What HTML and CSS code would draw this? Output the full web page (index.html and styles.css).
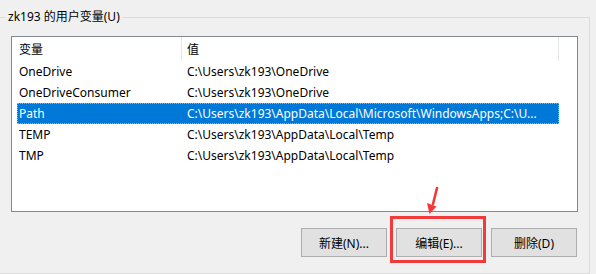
FILE: index.html
```html
<!DOCTYPE html>
<html lang="zh-CN">
<head>
    <meta charset="UTF-8">
    <meta name="viewport" content="width=device-width, initial-scale=1.0">
    <title>环境变量</title>
    <link rel="stylesheet" href="styles.css">
</head>
<body>
    <fieldset class="group">
        <legend class="group-title">zk193 的用户变量(U)</legend>

        <div class="list-view">
            <div class="list-header">
                <div class="col-head col-name">变量</div>
                <div class="col-head col-value">值</div>
                <div class="col-rest"></div>
            </div>
            <div class="list-row">
                <span class="cell">OneDrive</span>
                <span class="cell">C:\Users\zk193\OneDrive</span>
            </div>
            <div class="list-row">
                <span class="cell">OneDriveConsumer</span>
                <span class="cell">C:\Users\zk193\OneDrive</span>
            </div>
            <div class="list-row selected">
                <span class="cell">Path</span>
                <span class="cell">C:\Users\zk193\AppData\Local\Microsoft\WindowsApps;C:\U...</span>
            </div>
            <div class="list-row">
                <span class="cell">TEMP</span>
                <span class="cell">C:\Users\zk193\AppData\Local\Temp</span>
            </div>
            <div class="list-row">
                <span class="cell">TMP</span>
                <span class="cell">C:\Users\zk193\AppData\Local\Temp</span>
            </div>
        </div>

        <div class="button-row">
            <button class="button">新建(N)...</button>
            <div class="highlight">
                <button class="button">编辑(E)...</button>
                <!-- red annotation arrow -->
                <svg class="arrow" width="30" height="34" viewBox="0 0 30 34">
                    <path d="M21 4 L17 20" stroke="#f23a3a" stroke-width="2.6" stroke-linecap="round" fill="none"/>
                    <path d="M11 19 L13.5 30 L20.5 22.5 Z" fill="#f23a3a"/>
                </svg>
            </div>
            <button class="button">删除(D)</button>
        </div>
    </fieldset>
</body>
</html>
```

FILE: styles.css
```css
body {
    margin: 0;
    background-color: #f0f0f0;
    font-family: "Noto Sans", "Noto Sans CJK SC", sans-serif;
    font-size: 12px;
    color: #000;
    overflow: hidden;
}

/* Group box */
.group {
    margin: 9px 6px 0 -4px;
    padding: 0;
    border: 1px solid #dcdcdc;
    min-width: 0;
}

.group-title {
    margin-left: 9px;
    padding: 0 2px;
    line-height: 16px;
    height: 16px;
}

/* List view */
.list-view {
    margin: 11px 11px 0 14px;
    height: 174px;
    background-color: #fff;
    border: 1px solid #828790;
    overflow: hidden;
}

.list-header {
    display: flex;
    height: 24px;
}

.col-head {
    line-height: 25px;
    border-right: 1px solid #e5e5e5;
    height: 24px;
}

.col-name {
    width: 162px;
    padding-left: 7px;
}

.col-value {
    width: 371px;
    padding-left: 5px;
}

.col-rest {
    flex: 1;
}

.list-row {
    display: grid;
    grid-template-columns: 168px 1fr;
    width: 542px;
    height: 21px;
    margin-left: 5px;
    line-height: 22px;
}

.cell {
    padding: 0 2px;
    white-space: nowrap;
    overflow: hidden;
}

.list-row.selected {
    background-color: #0078d7;
    color: #fff;
    outline: 1px dotted #f0a04a;
    outline-offset: -1px;
}

/* Buttons */
.button-row {
    display: flex;
    justify-content: flex-end;
    gap: 9px;
    margin: 16px 12px 16px 0;
}

.button {
    width: 86px;
    height: 29px;
    background-color: #e1e1e1;
    border: 1px solid #adadad;
    font-family: "Noto Sans", "Noto Sans CJK SC", sans-serif;
    font-size: 12px;
    color: #000;
    padding: 0;
}

.highlight {
    position: relative;
}

.highlight::after {
    content: "";
    position: absolute;
    left: -6px;
    right: -4px;
    top: -12px;
    bottom: -6px;
    border: 3px solid #f23a3a;
}

.arrow {
    position: absolute;
    left: 20px;
    top: -44px;
}
```
